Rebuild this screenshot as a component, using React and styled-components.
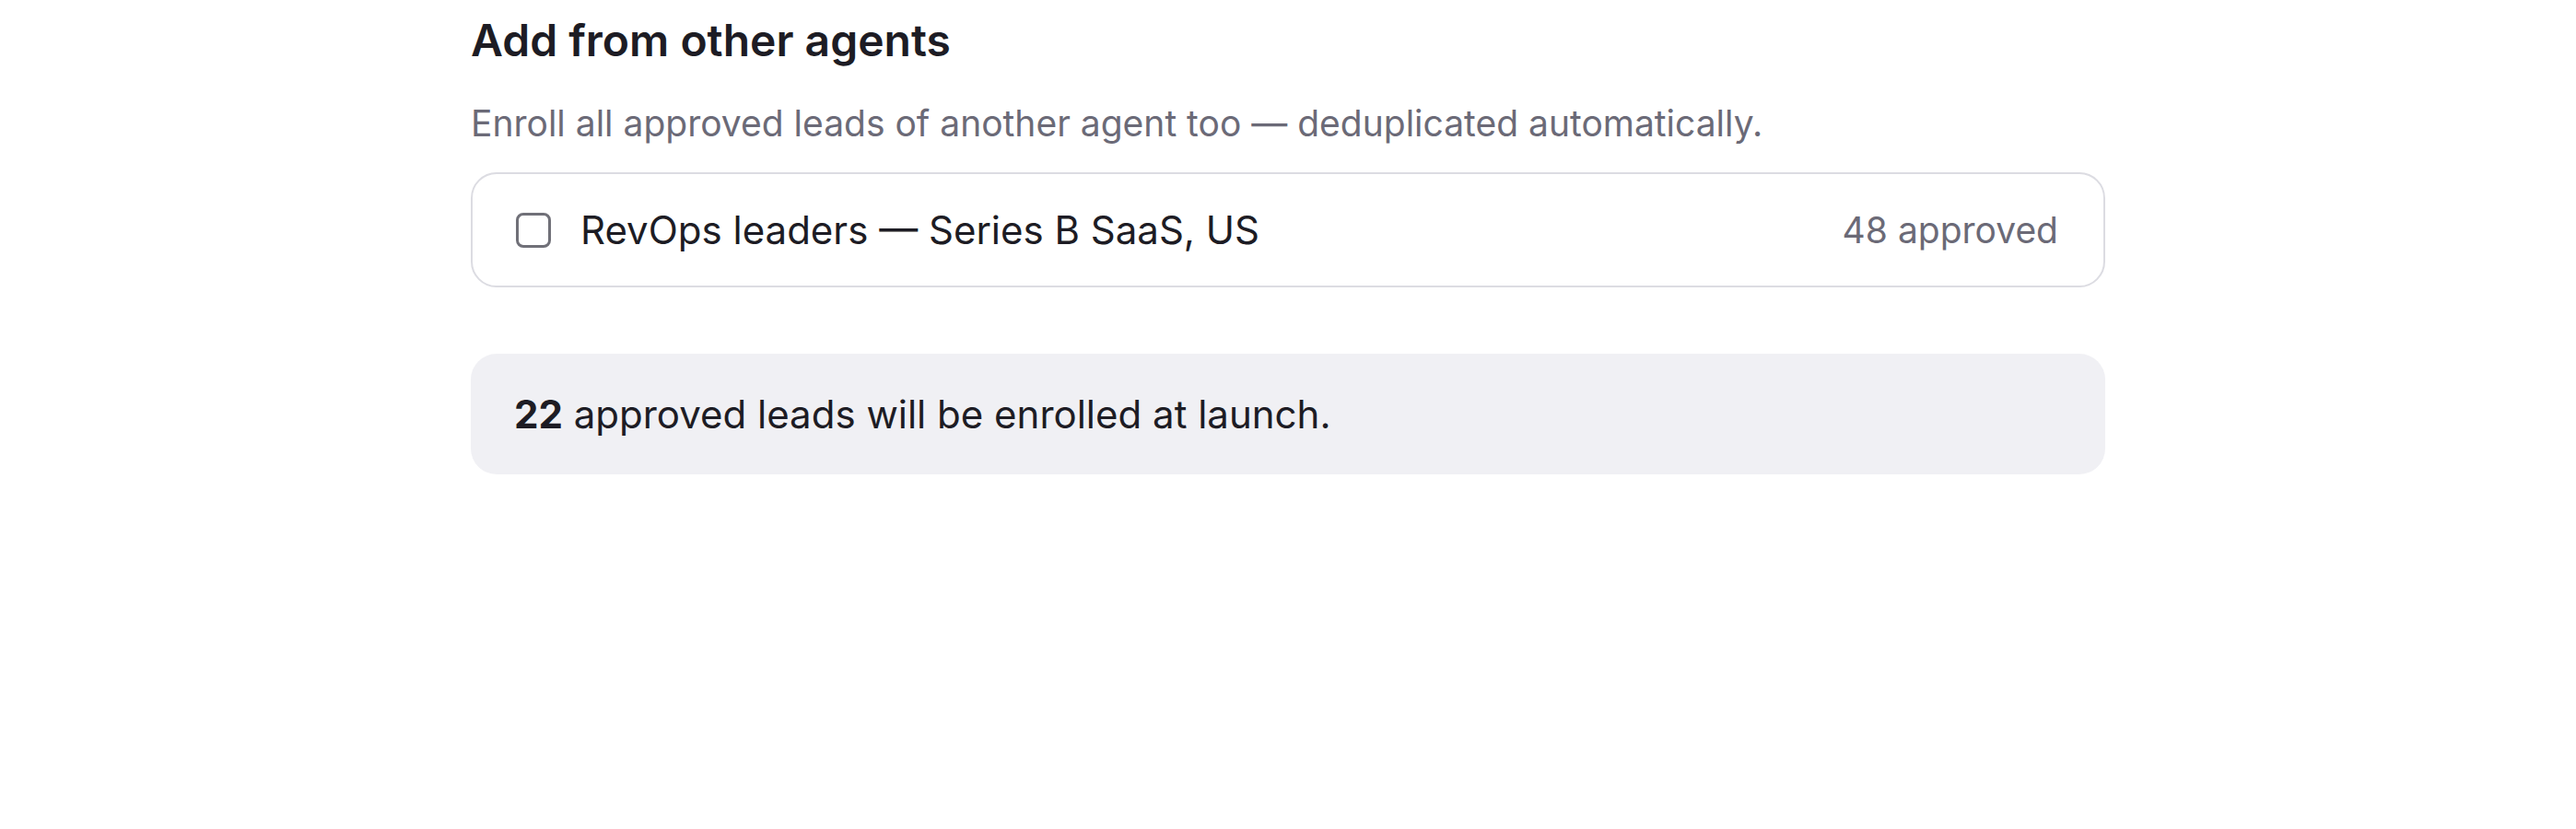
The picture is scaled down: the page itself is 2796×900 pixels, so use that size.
import React from "react";
import styled, { createGlobalStyle } from "styled-components";

const GlobalStyle = createGlobalStyle`
  html, body {
    margin: 0;
    padding: 0;
    background: #ffffff;
  }
  body {
    font-family: Inter, "Noto Sans", "Liberation Sans", sans-serif;
    -webkit-font-smoothing: antialiased;
  }
`;

const Page = styled.section`
  width: 1774px;
  margin: 0 auto;
  padding-top: 16px;
  display: flex;
  flex-direction: column;
`;

const Title = styled.h2`
  margin: 0;
  font-size: 48px;
  line-height: 56px;
  font-weight: 600;
  color: #1d1c24;
`;

const Lead = styled.p`
  margin: 34px 0 0;
  font-size: 39px;
  line-height: 56px;
  color: #6b6a77;
`;

const AgentList = styled.div`
  margin-top: 25px;
  display: flex;
  flex-direction: column;
  gap: 16px;
`;

const AgentRow = styled.label`
  box-sizing: border-box;
  height: 125px;
  padding: 0 49px 0 47px;
  display: flex;
  align-items: center;
  gap: 32px;
  border: 2px solid #dcdce2;
  border-radius: 28px;
  background: #fff;
  cursor: pointer;
`;

const Check = styled.span`
  box-sizing: border-box;
  width: 38px;
  height: 38px;
  flex-shrink: 0;
  border: 3px solid ${(p) => (p.checked ? "#1d1c24" : "#707078")};
  border-radius: 8px;
  background: ${(p) => (p.checked ? "#1d1c24" : "#fff")};
`;

const AgentName = styled.span`
  flex: 1;
  font-size: 42px;
  line-height: 56px;
  color: #1d1c24;
`;

const Count = styled.span`
  font-size: 39px;
  line-height: 56px;
  color: #6b6a77;
`;

const Summary = styled.div`
  box-sizing: border-box;
  margin-top: 72px;
  height: 131px;
  padding: 0 47px;
  display: flex;
  align-items: center;
  border-radius: 28px;
  background: #f0f0f4;
  font-size: 42px;
  line-height: 56px;
  color: #1d1c24;

  strong {
    font-weight: 700;
  }
`;

const agents = [
  { id: "revops", name: "RevOps leaders — Series B SaaS, US", approved: 48 },
];

export default function App() {
  return (
    <>
      <GlobalStyle />
      <Page>
        <Title>Add from other agents</Title>
        <Lead>
          Enroll all approved leads of another agent too — deduplicated
          automatically.
        </Lead>
        <AgentList>
          {agents.map((a) => (
            <AgentRow key={a.id}>
              <Check checked={false} />
              <AgentName>{a.name}</AgentName>
              <Count>{a.approved} approved</Count>
            </AgentRow>
          ))}
        </AgentList>
        <Summary>
          <span>
            <strong>22</strong> approved leads will be enrolled at launch.
          </span>
        </Summary>
      </Page>
    </>
  );
}
